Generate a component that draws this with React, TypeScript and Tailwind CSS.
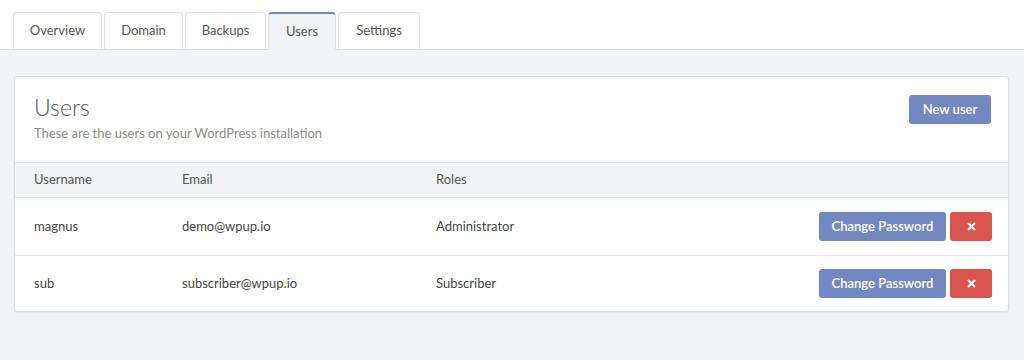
import React from "react";

const tabs = [
  { t: "Overview", w: "w-[89px]" },
  { t: "Domain", w: "w-[79px]" },
  { t: "Backups", w: "w-[81px]" },
  { t: "Users", w: "w-[68px]" },
  { t: "Settings", w: "w-[82px]" },
];
const users = [
  { name: "magnus", email: "demo@wpup.io", role: "Administrator" },
  { name: "sub", email: "subscriber@wpup.io", role: "Subscriber" },
];

export default function App() {
  return (
    <div
      className="w-[1024px] h-[360px] bg-[#f2f3f5] text-[#4a4a4a] overflow-hidden"
      style={{ fontFamily: "Lato, 'Open Sans', sans-serif" }}
    >
      <div className="bg-white border-b border-[#d8dadd] h-[50px] flex items-end pl-[13px] gap-[2px]">
        {tabs.map(({ t, w }) => {
          const active = t === "Users";
          return (
            <div
              key={t}
              className={
                w +
                " h-[38px] -mb-px flex items-center justify-center text-[13px] rounded-t-[4px] border border-[#dfe1e5] " +
                (active
                  ? "bg-[#f2f3f5] border-t-2 border-t-[#7385c0] border-b-[#f2f3f5] text-[#555]"
                  : "bg-white border-b-[#d8dadd] text-[#555]")
              }
            >
              {t}
            </div>
          );
        })}
      </div>
      <div className="px-[14px] pt-[26px]">
        <div className="w-[995px] bg-white border border-[#dcdee2] rounded-[3px] shadow-[0_1px_2px_rgba(0,0,0,0.05)]">
          <div className="flex justify-between pl-[19px] pr-[17px] h-[85px]">
            <div className="pt-[16px]">
              <div className="text-[23px] font-light text-[#555] leading-[28px]">Users</div>
              <div className="text-[13px] text-[#8a8a8a] mt-[3px]">
                These are the users on your WordPress installation
              </div>
            </div>
            <div className="pt-[18px]">
              <button className="h-[29px] w-[82px] rounded-[3px] bg-[#7387c1] text-white text-[13px] font-semibold">
                New user
              </button>
            </div>
          </div>
          <div className="flex items-center h-[36px] bg-[#f2f3f5] border-y border-[#e2e3e6] pl-[19px] text-[13px] text-[#555]">
            <div className="w-[148px]">Username</div>
            <div className="w-[254px]">Email</div>
            <div>Roles</div>
          </div>
          {users.map((u, i) => (
            <div
              key={u.name}
              className={
                "flex items-center pl-[19px] pr-[16px] text-[13px] text-[#444] " +
                (i > 0 ? "h-[56px] border-t border-[#e5e6e8]" : "h-[57px]")
              }
            >
              <div className="w-[148px]">{u.name}</div>
              <div className="w-[254px]">{u.email}</div>
              <div className="flex-1">{u.role}</div>
              <div className="flex gap-[4px]">
                <button className="h-[29px] w-[127px] rounded-[3px] bg-[#7387c1] text-white text-[13px] font-semibold">
                  Change Password
                </button>
                <button className="h-[29px] w-[42px] rounded-[3px] bg-[#d9534f] text-white flex items-center justify-center">
                  <svg width="9" height="9" viewBox="0 0 10 10">
                    <path d="M2 2 L8 8 M8 2 L2 8" stroke="white" strokeWidth="2.4" strokeLinecap="square" />
                  </svg>
                </button>
              </div>
            </div>
          ))}
        </div>
      </div>
    </div>
  );
}
